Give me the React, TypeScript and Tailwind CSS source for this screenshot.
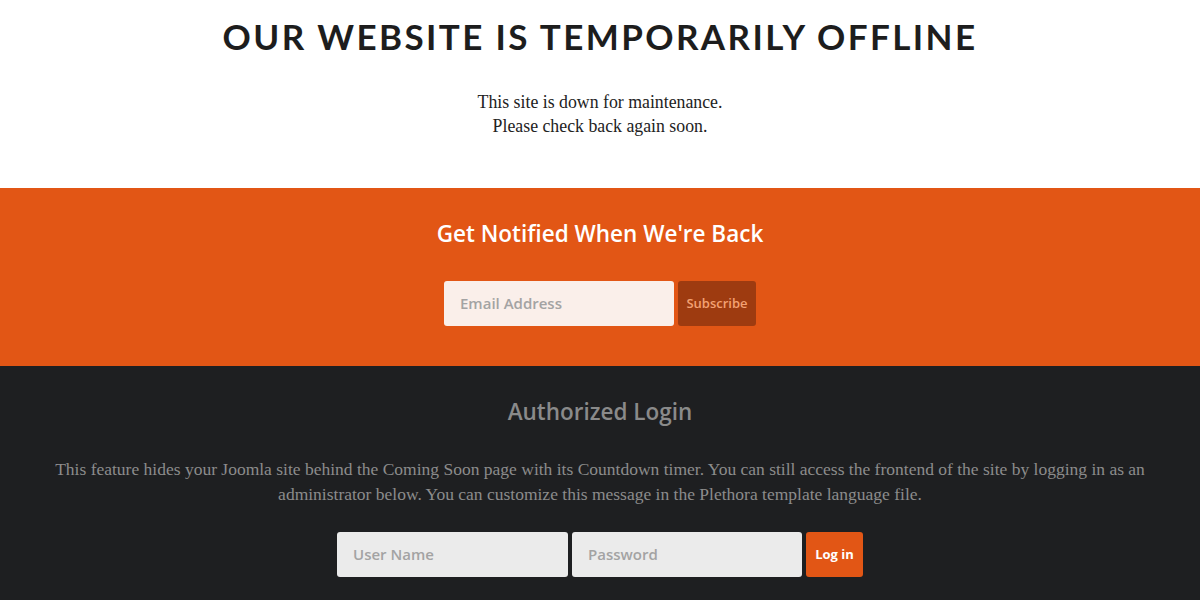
import React from "react";

export default function App() {
  return (
    <div className="w-full min-h-[600px]">
      <section className="bg-white h-[188px] flex flex-col items-center pt-[14px]">
        <h1 className="font-['Lato','Open_Sans',sans-serif] text-[35px] leading-[44px] font-bold tracking-[2.4px] text-[#1d1d1d]">
          OUR WEBSITE IS TEMPORARILY OFFLINE
        </h1>
        <div className="font-['Liberation_Serif',serif] mt-[32px] text-[17.8px] leading-[24px] text-[#222] text-center">
          <p>This site is down for maintenance.</p>
          <p>Please check back again soon.</p>
        </div>
      </section>
      <section className="bg-[#e25615] h-[178px] flex flex-col items-center pt-[30px]">
        <h2 className="font-['Open_Sans',sans-serif] text-[22.5px] leading-[32px] font-semibold text-white">
          Get Notified When We're Back
        </h2>
        <div className="mt-[31px] flex gap-[4px]">
          <div className="font-['Open_Sans',sans-serif] w-[230px] h-[45px] bg-[#faefea] rounded-[3px] flex items-center px-[16px] text-[15px] font-semibold text-[#a3a3a3]">
            Email Address
          </div>
          <button className="font-['Open_Sans',sans-serif] w-[78px] h-[45px] bg-[#9e3b10] rounded-[3px] text-[13px] font-semibold text-[#f3a173]">
            Subscribe
          </button>
        </div>
      </section>
      <section className="bg-[#1e1f21] h-[234px] flex flex-col items-center pt-[30px]">
        <h2 className="font-['Open_Sans',sans-serif] text-[22.5px] leading-[32px] font-semibold text-[#8a8a8a]">
          Authorized Login
        </h2>
        <p className="font-['Liberation_Serif',serif] mt-[29px] max-w-[1110px] text-center text-[17.5px] leading-[25px] text-[#8c8c8c]">
          This feature hides your Joomla site behind the Coming Soon page with its Countdown timer. You can still access the frontend of the site by logging in as an administrator below. You can customize this message in the Plethora template language file.
        </p>
        <div className="mt-[25px] flex gap-[4px]">
          <div className="font-['Open_Sans',sans-serif] w-[231px] h-[45px] bg-[#ebebeb] rounded-[3px] flex items-center px-[16px] text-[15px] font-semibold text-[#a3a3a3]">
            User Name
          </div>
          <div className="font-['Open_Sans',sans-serif] w-[230px] h-[45px] bg-[#ebebeb] rounded-[3px] flex items-center px-[16px] text-[15px] font-semibold text-[#a3a3a3]">
            Password
          </div>
          <button className="font-['Open_Sans',sans-serif] w-[57px] h-[45px] bg-[#e25615] rounded-[3px] text-[13px] font-bold text-white">
            Log in
          </button>
        </div>
      </section>
    </div>
  );
}
